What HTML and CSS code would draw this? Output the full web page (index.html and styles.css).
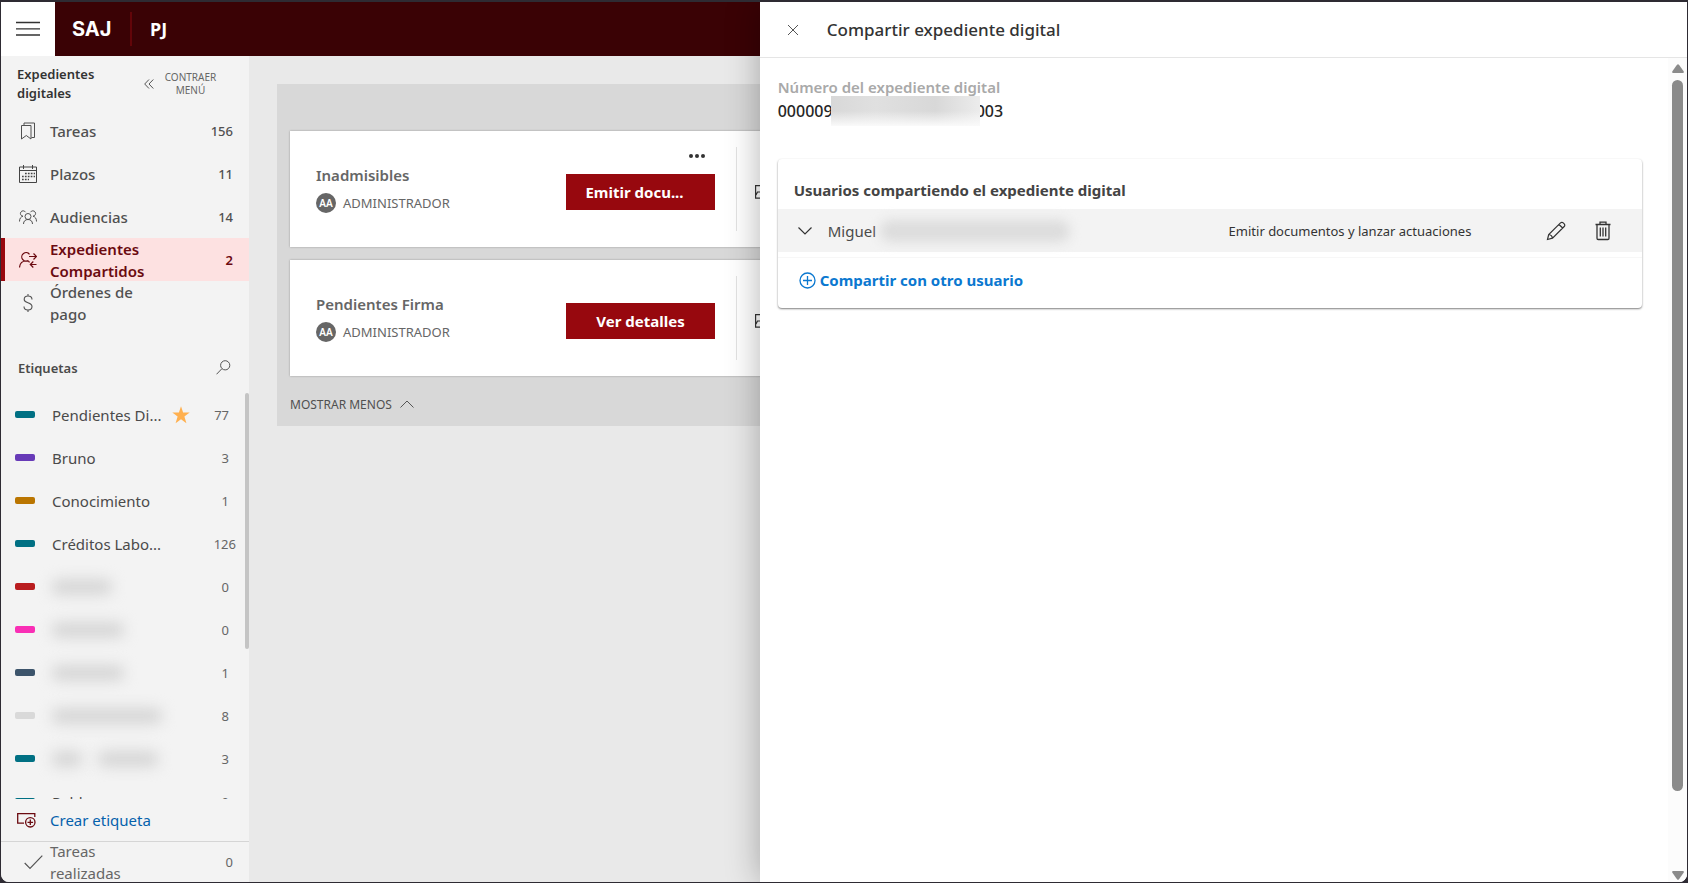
FILE: index.html
```html
<!DOCTYPE html>
<html lang="es">
<head>
<meta charset="utf-8">
<title>Compartir expediente digital</title>
<link rel="stylesheet" href="styles.css">
</head>
<body>
<div class="app">
  <header class="topbar">
    <button class="menu-btn" aria-label="Menú">
      <svg width="24" height="16" viewBox="0 0 24 16" stroke="#333" stroke-width="1.3"><path d="M0 1.5h24M0 7.8h24M0 14h24"/></svg>
    </button>
    <span class="logo">SAJ</span>
    <span class="topbar-sep"></span>
    <span class="org">PJ</span>
  </header>

  <div class="workspace">
    <aside class="sidebar">
      <div class="side-head">
        <h2 class="side-title">Expedientes digitales</h2>
        <button class="collapse-btn">
          <svg width="10" height="10" viewBox="0 0 10 10" fill="none" stroke="#555" stroke-width="1"><path d="M5 .5L.7 5 5 9.500M9.300 .5L5 5l4.300 4.500"/></svg>
          <span>CONTRAER MENÚ</span>
        </button>
      </div>
      <nav class="nav">
        <a class="nav-item" href="#">
          <svg class="nav-icon" viewBox="0 0 18 18" fill="none" stroke="#505050"><path d="M2.500 3.500h9.500v13.500l-4.700-3.500-4.800 3.500zM5 3.500V1h10.500v14.500h-3"/></svg>
          <span class="nav-label">Tareas</span><span class="nav-count">156</span>
        </a>
        <a class="nav-item" href="#">
          <svg class="nav-icon" viewBox="0 0 18 18" fill="none" stroke="#444"><path d="M.5 2h17v15.500H.5zM.5 5.500h17M4.500 0v4M13.500 0v4"/><path d="M6 8.500h10M3 11.500h13M3 14.500h7" stroke-width="1.700" stroke-dasharray="1.700 1.200"/></svg>
          <span class="nav-label">Plazos</span><span class="nav-count">11</span>
        </a>
        <a class="nav-item" href="#">
          <svg class="nav-icon" viewBox="0 0 18 18" fill="none" stroke="#505050"><circle cx="9" cy="8.500" r="3"/><path d="M4.500 16c0-3 2-4.500 4.500-4.500s4.500 1.500 4.500 4.500M6.500 4.200A2.700 2.700 0 1 0 4 8.200C1.800 8.800.5 10.500.5 13.500M11.500 4.200A2.700 2.700 0 1 1 14 8.200c2.200.6 3.500 2.300 3.500 5.300"/></svg>
          <span class="nav-label">Audiencias</span><span class="nav-count">14</span>
        </a>
        <a class="nav-item active" href="#">
          <svg class="nav-icon" viewBox="0 0 18 18" fill="none" stroke="#6b0a10" stroke-width="1.200"><path d="M10.500 3.300A4.300 4.300 0 1 0 9.500 9.500M.5 16.500c.4-4 3-6.500 6.500-6.500 1.500 0 2.800.5 3.700 1.300M10 5.500h7M14.500 2.500l3 3-3 3M17.500 13.500h-6M14.300 10.500l-3 3 3 3"/></svg>
          <span class="nav-label">Expedientes Compartidos</span><span class="nav-count">2</span>
        </a>
        <a class="nav-item" href="#">
          <svg class="nav-icon" viewBox="0 0 18 18" fill="none" stroke="#505050" stroke-width="1.100"><path d="M9 0v2M9 16v2M13 5.500C13 3.300 11.500 2 9 2S5.200 3.500 5.200 5.400C5.200 9.500 13 8 13 12.500 13 14.700 11.300 16 9 16s-4-1.300-4-3.500"/></svg>
          <span class="nav-label">Órdenes de pago</span><span class="nav-count"></span>
        </a>
      </nav>

      <div class="tags-head">
        <h3 class="tags-title">Etiquetas</h3>
        <button class="icon-btn" aria-label="Buscar"><svg width="15" height="15" viewBox="0 0 15 15" fill="none" stroke="#555"><circle cx="9.200" cy="5.300" r="4.600"/><path d="M5.800 8.800L.5 14.300"/></svg></button>
      </div>
      <div class="tags-scroll">
        <ul class="tags">
          <li class="tag"><i class="chip teal"></i><span class="tag-name">Pendientes Di...</span><svg class="star" viewBox="0 0 18 18" fill="#ffb04f"><path d="M9 .3l2.100 6.300h6.600l-5.300 4 2 6.600L9 13.200l-5.400 4 2-6.600-5.300-4h6.600z"/></svg><span class="tag-count">77</span></li>
          <li class="tag"><i class="chip purple"></i><span class="tag-name">Bruno</span><span class="tag-count">3</span></li>
          <li class="tag"><i class="chip amber"></i><span class="tag-name">Conocimiento</span><span class="tag-count">1</span></li>
          <li class="tag"><i class="chip teal"></i><span class="tag-name">Créditos Labo...</span><span class="tag-count wide">126</span></li>
          <li class="tag"><i class="chip red"></i><span class="tag-name"><i class="smudge w60"></i></span><span class="tag-count">0</span></li>
          <li class="tag"><i class="chip pink"></i><span class="tag-name"><i class="smudge w72"></i></span><span class="tag-count">0</span></li>
          <li class="tag"><i class="chip slate"></i><span class="tag-name"><i class="smudge w72"></i></span><span class="tag-count">1</span></li>
          <li class="tag"><i class="chip light"></i><span class="tag-name"><i class="smudge w110"></i></span><span class="tag-count">8</span></li>
          <li class="tag"><i class="chip teal"></i><span class="tag-name"><i class="smudge w30"></i><i class="smudge w60"></i></span><span class="tag-count">3</span></li>
          <li class="tag"><i class="chip teal"></i><span class="tag-name">Pabl</span><span class="tag-count">0</span></li>
        </ul>
        <div class="tags-bar"></div>
      </div>
      <button class="create-tag">
        <svg width="19" height="16" viewBox="0 0 19 16" fill="none" stroke="#6b0a10" stroke-width="1.300"><path d="M7 11.200H.7V1.700h17.100V5"/><circle cx="13.300" cy="10.300" r="4.700"/><path d="M10.500 10.300h5.600M13.300 7.500v5.600"/></svg>
        <span>Crear etiqueta</span>
      </button>
      <a class="done" href="#">
        <svg width="19" height="15" viewBox="0 0 19 15" fill="none" stroke="#555" stroke-width="1.200"><path d="M.7 8l5.300 5.500L18.300.7"/></svg>
        <span class="done-label">Tareas realizadas</span><span class="nav-count">0</span>
      </a>
    </aside>

    <main class="main">
      <section class="group">
        <article class="card">
          <div class="card-info">
            <h4 class="card-title">Inadmisibles</h4>
            <div class="owner"><span class="avatar">AA</span><span>ADMINISTRADOR</span></div>
          </div>
          <div class="card-action">
            <button class="more" aria-label="Más opciones"><svg width="16" height="4" viewBox="0 0 16 4" fill="#333"><circle cx="2" cy="2" r="2"/><circle cx="8" cy="2" r="2"/><circle cx="14" cy="2" r="2"/></svg></button>
            <button class="primary clipped">Emitir docu...</button>
          </div>
          <div class="card-extra"><svg width="18" height="14" viewBox="0 0 18 14" fill="none" stroke="#333" stroke-width="1.200"><path d="M.6.6h16.800v12.500H.6zM1 10l1.500-3h5"/></svg></div>
        </article>
        <article class="card">
          <div class="card-info">
            <h4 class="card-title">Pendientes Firma</h4>
            <div class="owner"><span class="avatar">AA</span><span>ADMINISTRADOR</span></div>
          </div>
          <div class="card-action">
            <button class="primary">Ver detalles</button>
          </div>
          <div class="card-extra"><svg width="18" height="14" viewBox="0 0 18 14" fill="none" stroke="#333" stroke-width="1.200"><path d="M.6.6h16.800v12.500H.6zM1 10l1.500-3h5"/></svg></div>
        </article>
        <button class="less">MOSTRAR MENOS <svg width="14" height="8" viewBox="0 0 14 8" fill="none" stroke="#555"><path d="M.5 7.500L7 1l6.500 6.500"/></svg></button>
      </section>
    </main>
  </div>

  <aside class="drawer" role="dialog" aria-labelledby="drawer-title">
    <header class="drawer-head">
      <button class="icon-btn" aria-label="Cerrar"><svg width="12" height="12" viewBox="0 0 12 12" stroke="#555"><path d="M1 1l10 10M11 1L1 11"/></svg></button>
      <h1 class="drawer-title" id="drawer-title">Compartir expediente digital</h1>
    </header>
    <div class="drawer-scroll">
      <div class="drawer-body">
        <div class="field-label">Número del expediente digital</div>
        <div class="field-value"><span>000009</span><span class="veil"></span><span>003</span></div>
        <section class="share">
          <h2 class="share-title">Usuarios compartiendo el expediente digital</h2>
          <div class="share-row">
            <button class="icon-btn" aria-label="Expandir"><svg width="14" height="8" viewBox="0 0 14 8" fill="none" stroke="#333" stroke-width="1.200"><path d="M.5.5L7 7 13.500.5"/></svg></button>
            <span class="person">Miguel</span>
            <span class="veil-name"></span>
            <span class="role">Emitir documentos y lanzar actuaciones</span>
            <div class="row-tools">
              <button class="icon-btn" aria-label="Editar"><svg width="20" height="20" viewBox="0 0 20 20" fill="none" stroke="#333" stroke-width="1.200"><path d="M1.500 18.500l1.200-5L14.500 1.900a1.900 1.900 0 0 1 2.800 0l.9.900a1.900 1.900 0 0 1 0 2.700L6.500 17.200zM2.700 13.500c1.900.2 3.500 1.800 3.800 3.700M13 3.500L16.700 7"/></svg></button>
              <button class="icon-btn" aria-label="Eliminar"><svg width="16" height="20" viewBox="0 0 16 20" fill="none" stroke="#333" stroke-width="1.300"><path d="M.5 3.500h15M5 3.500V1.200h6v2.300M2 3.500v13.800c0 .8.400 1.200 1.200 1.200h9.600c.8 0 1.200-.4 1.200-1.200V3.500M5.300 6.500v9M8 6.500v9M10.700 6.500v9"/></svg></button>
            </div>
          </div>
          <div class="share-foot">
            <button class="add-user"><svg width="17" height="17" viewBox="0 0 17 17" fill="none" stroke="#0b78d0" stroke-width="1.300"><circle cx="8.500" cy="8.500" r="7.500"/><path d="M4 8.500h9M8.500 4v9"/></svg><span>Compartir con otro usuario</span></button>
          </div>
        </section>
      </div>
      <div class="scrollbar">
        <svg width="12" height="10" viewBox="0 0 12 10" fill="#8b8b8b"><path d="M5 .8q1-1.200 2 0l4.600 6.500q.8 1.700-.8 1.700H1.200q-1.600 0-.8-1.700z"/></svg>
        <div class="thumb"></div>
        <svg width="12" height="10" viewBox="0 0 12 10" fill="#8b8b8b"><path d="M5 9.200q1 1.200 2 0l4.600-6.500Q12.400 1 10.800 1H1.200Q-.4 1 .4 2.700z"/></svg>
      </div>
    </div>
  </aside>
</div>
</body>
</html>
```

FILE: styles.css
```css
* { box-sizing: border-box; }
body {
  margin: 0;
  background: #2e2b33;
  font-family: "Noto Sans", "Open Sans", sans-serif;
  font-size: 15px;
  color: #4a4a4a;
}
h1, h2, h3, h4, ul { margin: 0; padding: 0; }
ul { list-style: none; }
button { font: inherit; color: inherit; background: none; border: 0; padding: 0; cursor: pointer; }
a { color: inherit; text-decoration: none; }
svg { display: block; flex: none; }

.app {
  position: relative;
  height: calc(100vh - 3px);
  margin: 2px 1px 1px;
  display: flex;
  flex-direction: column;
  overflow: hidden;
  border-radius: 0 0 8px 8px;
  background: #e9e9e9;
}

.topbar { display: flex; align-items: center; height: 54px; flex: none; background: #3a0205; color: #fff; }
.menu-btn { width: 54px; height: 54px; display: grid; place-items: center; background: #fff; }
.logo { margin-left: 17px; width: 40px; font: 700 20px "Inter", sans-serif; }
.topbar-sep { width: 2px; height: 34px; margin: 0 18px; background: #620509; }
.org { font-size: 18px; font-weight: 700; }

.workspace { flex: 1; min-height: 0; display: flex; }
.sidebar { width: 248px; flex: none; display: flex; flex-direction: column; background: #f3f3f3; }
.side-head { display: flex; align-items: center; height: 53px; flex: none; padding: 2px 32px 0 16px; }
.side-title { width: 127px; font-size: 13px; line-height: 19px; font-weight: 600; color: #333; }
.collapse-btn { display: flex; align-items: center; gap: 10px; flex: 1; font-size: 10px; line-height: 13px; color: #666; }
.collapse-btn span { flex: 1; }

.nav { flex: none; }
.nav-item {
  display: flex; align-items: center; height: 43px;
  padding: 0 16px 0 14px; border-left: 4px solid transparent;
  font-weight: 500; line-height: 22px; color: #505050;
}
.nav-item.active { background: #fde1e1; border-color: #97080e; color: #6b0a10; font-weight: 600; }
.nav-icon { width: 18px; height: 18px; }
.nav-label { flex: 1; margin: 0 38px 0 13px; }
.nav-count { width: 26px; text-align: right; font-size: 13px; }

.tags-head { display: flex; align-items: center; justify-content: space-between; height: 69px; flex: none; padding: 18px 18px 0 17px; }
.tags-title { font-size: 13px; font-weight: 600; }
.icon-btn { display: grid; place-items: center; }
.tags-scroll { flex: 1; min-height: 0; display: flex; align-items: flex-start; overflow: hidden; }
.tags { flex: 1; }
.tag { display: flex; align-items: center; height: 43px; padding-left: 14px; }
.chip { width: 20px; height: 7px; border-radius: 2px; flex: none; margin-right: 17px; }
.teal { background: #007083; }
.purple { background: #673ab7; }
.amber { background: #ba7500; }
.red { background: #b91d1f; }
.pink { background: #f92fb5; }
.slate { background: #3c546b; }
.light { background: #d9d9d9; }
.tag-name { flex: 1; display: flex; gap: 16px; white-space: nowrap; }
.star { width: 18px; height: 18px; }
.tag-count { width: 40px; padding-right: 16px; text-align: right; font-size: 13px; color: #666; }
.tag .star + .tag-count { width: 55px; }
.tag-count.wide { padding-right: 9px; }
.smudge { height: 16px; border-radius: 6px; background: #d6d6d6; filter: blur(7px); }
.w30 { width: 30px; }
.w60 { width: 60px; }
.w72 { width: 72px; }
.w110 { width: 110px; }
.tags-bar { width: 4px; height: 63%; border-radius: 2px; background: #c4c4c4; }

.create-tag { display: flex; align-items: center; gap: 14px; height: 42px; flex: none; padding: 0 0 0 16px; color: #0561ac; }
.done { display: flex; align-items: center; height: 41px; flex: none; padding: 0 16px 0 23px; border-top: 1px solid #d5d5d5; line-height: 22px; color: #666; }
.done-label { flex: 1; margin: 0 50px 0 7px; }

.main { flex: 1; min-width: 0; padding: 28px; }
.group { padding: 47px 13px 0; background: #d8d8d8; }
.card { display: flex; height: 116px; margin-bottom: 13px; background: #fff; box-shadow: 0 0 2px rgba(0, 0, 0, .3); }
.card + .card { margin-bottom: 10px; }
.card-info { width: 276px; flex: none; padding: 32px 0 0 26px; }
.card-title { font-size: 15px; line-height: 24px; font-weight: 600; color: #666; }
.owner { display: flex; align-items: center; gap: 7px; margin-top: 6px; font-size: 13px; line-height: 20px; color: #666; }
.avatar { width: 20px; height: 20px; border-radius: 50%; background: #666; color: #fff; text-align: center; font-size: 10px; font-weight: 600; }
.card-action { position: relative; width: 170px; flex: none; padding-top: 43px; }
.more { position: absolute; top: 23px; right: 31px; }
.primary { display: block; width: 149px; height: 36px; background: #97080e; color: #fff; font-weight: 700; }
.clipped { padding-right: 12px; }
.card-extra { flex: 1; display: flex; align-items: center; margin: 16px 0; padding: 6px 0 0 18px; border-left: 1px solid #e3e3e3; }
.less { display: flex; align-items: center; gap: 8px; height: 40px; padding-bottom: 4px; font-size: 12px; color: #505050; }

.drawer {
  position: absolute; top: 0; right: 0; bottom: 0; width: 55%;
  display: flex; flex-direction: column; background: #fff;
  box-shadow: 0 0 32px rgba(0, 0, 0, .3);
}
.drawer-head { display: flex; align-items: center; gap: 28px; height: 56px; flex: none; padding-left: 27px; border-bottom: 1px solid #e5e5e5; }
.drawer-title { font-size: 17px; font-weight: 500; color: #333; }
.drawer-scroll { flex: 1; min-height: 0; display: flex; }
.drawer-body { flex: 1; padding: 17px 26px 0 18px; }
.field-label { font-size: 15px; line-height: 24px; font-weight: 600; color: #a9a9a9; }
.field-value { display: flex; align-items: center; height: 24px; font-size: 16px; font-weight: 500; color: #262626; }
.veil { width: 149px; height: 30px; margin: 0 -4px 0 -2px; z-index: 1; background: linear-gradient(#fff0 50%, #fafafa), linear-gradient(90deg, #d8d8d8, #e0e0e0 30%, #d8d8d8 70%, #ececec); }
.share { margin-top: 36px; border-radius: 4px; box-shadow: 0 1px 2px rgba(0, 0, 0, .5); }
.share-title { height: 50px; padding: 18px 16px 0; font-size: 15px; line-height: 26px; font-weight: 700; color: #444; }
.share-row { display: flex; align-items: center; height: 43px; padding: 0 31px 0 20px; background: #f3f3f3; }
.person { margin-left: 16px; }
.veil-name { width: 190px; height: 22px; margin-left: 4px; border-radius: 10px; background: #dcdcdc; filter: blur(6px); }
.role { flex: 1; padding-left: 84px; text-align: center; font-size: 13px; color: #333; }
.row-tools { display: flex; gap: 29px; }
.share-foot { margin-top: 5px; height: 51px; padding: 12px 21px; border-top: 1px solid #f7f7f7; }
.add-user { display: flex; align-items: center; gap: 4px; font-weight: 700; line-height: 20px; color: #0b78d0; }
.scrollbar { width: 19px; display: flex; flex-direction: column; align-items: center; gap: 6px; padding: 6px 0 2px; background: #fcfcfc; }
.thumb { width: 11px; height: 711px; max-height: 90%; margin-bottom: auto; border-radius: 6px; background: #8b8b8b; }
```
